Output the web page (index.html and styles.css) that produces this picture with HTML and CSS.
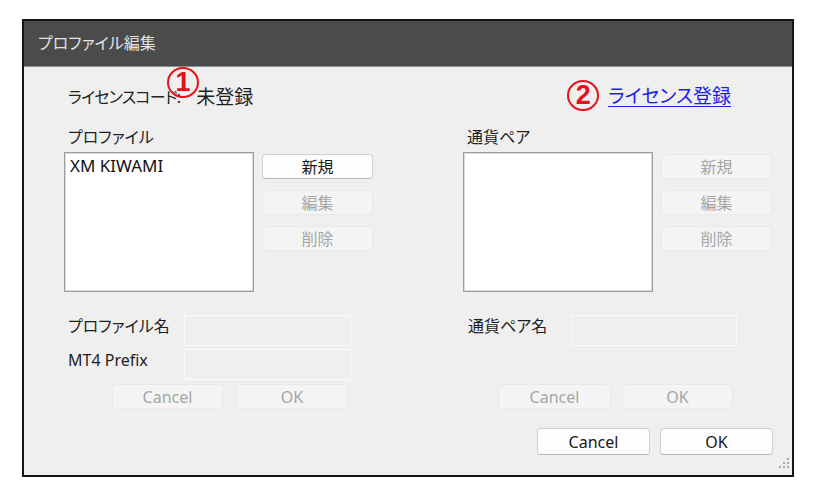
FILE: index.html
```html
<!DOCTYPE html>
<html lang="ja">
<head>
<meta charset="utf-8">
<title>プロファイル編集</title>
<link rel="stylesheet" href="styles.css">
</head>
<body>
<div class="dialog">
  <div class="titlebar">プロファイル編集</div>
  <div class="content">
    <div class="license-row">
      <div class="license-left">
        <span class="license-label">ライセンスコード:</span>
        <span class="license-value">未登録</span>
      </div>
      <span class="marker marker-1">1</span>
      <div class="license-right">
        <span class="marker marker-2">2</span>
        <a class="license-link" href="#">ライセンス登録</a>
      </div>
    </div>

    <div class="grid">
      <div class="group-label">プロファイル</div>
      <div class="group-label">通貨ペア</div>

      <div class="list-area">
        <div class="listbox"><div class="list-item">XM KIWAMI</div></div>
        <div class="side-buttons">
          <button class="btn">新規</button>
          <button class="btn" disabled>編集</button>
          <button class="btn" disabled>削除</button>
        </div>
      </div>
      <div class="list-area">
        <div class="listbox"></div>
        <div class="side-buttons">
          <button class="btn" disabled>新規</button>
          <button class="btn" disabled>編集</button>
          <button class="btn" disabled>削除</button>
        </div>
      </div>

      <div class="form form-left">
        <div class="form-row">
          <span class="form-label">プロファイル名</span>
          <span class="input"></span>
        </div>
        <div class="form-row">
          <span class="form-label">MT4 Prefix</span>
          <span class="input"></span>
        </div>
      </div>
      <div class="form form-right">
        <div class="form-row">
          <span class="form-label">通貨ペア名</span>
          <span class="input"></span>
        </div>
      </div>

      <div class="sub-buttons sub-left">
        <button class="btn btn-cancel" disabled>Cancel</button>
        <button class="btn btn-ok" disabled>OK</button>
      </div>
      <div class="sub-buttons sub-right">
        <button class="btn btn-cancel" disabled>Cancel</button>
        <button class="btn btn-ok" disabled>OK</button>
      </div>
    </div>

    <div class="main-buttons">
      <button class="btn btn-main">Cancel</button>
      <button class="btn btn-main">OK</button>
    </div>
  </div>
  <svg class="grip" width="14" height="14" viewBox="0 0 14 14">
    <rect x="11" y="1" width="2" height="2" fill="#a9a9a9"/>
    <rect x="7" y="5" width="2" height="2" fill="#a9a9a9"/>
    <rect x="11" y="5" width="2" height="2" fill="#a9a9a9"/>
    <rect x="3" y="9" width="2" height="2" fill="#a9a9a9"/>
    <rect x="7" y="9" width="2" height="2" fill="#a9a9a9"/>
    <rect x="11" y="9" width="2" height="2" fill="#a9a9a9"/>
  </svg>
</div>
</body>
</html>
```

FILE: styles.css
```css
* { box-sizing: border-box; }

html, body {
  margin: 0;
  padding: 0;
  background: #ffffff;
}

body {
  padding: 19px 0 0 22px;
  font-family: "Noto Sans", "Noto Sans CJK JP", sans-serif;
  font-feature-settings: "palt";
  color: #1e1e1e;
}

.dialog {
  position: relative;
  width: 772px;
  height: 458px;
  border: 2px solid #151515;
  background: #efefef;
  display: flex;
  flex-direction: column;
}

.titlebar {
  height: 46px;
  background: #4b4b4b;
  border-bottom: 1px solid #8d8d8d;
  color: #e4e4e4;
  font-size: 16px;
  line-height: 45px;
  padding-left: 14px;
  flex: none;
}

.content {
  flex: 1;
  padding: 0 19px 0 40px;
}

.license-row {
  position: relative;
  margin-top: 9px;
  height: 34px;
  display: flex;
  align-items: center;
  justify-content: space-between;
}

.license-left {
  padding-left: 4px;
  padding-top: 6px;
  display: flex;
  align-items: center;
}

.license-label {
  color: #222;
  font-size: 16px;
  letter-spacing: -0.8px;
}

.license-value {
  margin-left: 16px;
  font-size: 19px;
}

.marker {
  display: inline-flex;
  align-items: center;
  justify-content: center;
  width: 32px;
  height: 31px;
  border: 2px solid #e5121b;
  border-radius: 50%;
  color: #e5121b;
  font-family: "Liberation Sans", "Noto Sans", sans-serif;
  font-weight: bold;
  font-size: 27px;
  line-height: 1;
  background: transparent;
}

.marker-1 {
  position: absolute;
  left: 103px;
  top: -9px;
}

.license-right {
  display: flex;
  align-items: center;
  margin-right: 42px;
  padding-top: 4px;
}

.marker-2 {
  margin-right: 9px;
}

.license-link {
  color: #1d1de6;
  font-size: 19px;
  text-decoration: underline;
  text-underline-offset: 3px;
}

.grid {
  margin-top: 17px;
  display: grid;
  grid-template-columns: 309px 309px;
  column-gap: 90px;
  align-items: start;
}

.group-label {
  padding-left: 4px;
  height: 20px;
  line-height: 20px;
  font-size: 16px;
  margin-bottom: 5px;
}

.list-area {
  display: flex;
  gap: 8px;
  height: 140px;
}

.listbox {
  width: 190px;
  height: 140px;
  background: #ffffff;
  border: 1px solid #9d9d9d;
  box-shadow: inset 0 0 0 1px #d9d9d9;
  padding: 3px 5px;
}

.list-item {
  font-size: 17px;
  line-height: 20px;
  color: #111;
}

.side-buttons {
  display: flex;
  flex-direction: column;
  gap: 11px;
  padding-top: 2px;
}

.btn {
  font-family: "Noto Sans", "Noto Sans CJK JP", sans-serif;
  font-feature-settings: "palt";
  width: 111px;
  height: 25px;
  padding: 0;
  font-size: 16px;
  line-height: 1;
  background: #fdfdfd;
  color: #1a1a1a;
  border: 1px solid #cfcfcf;
  border-bottom-color: #b8b8b8;
  border-radius: 4px;
}

.btn:disabled {
  background: #f4f4f4;
  color: #a6a6a6;
  border-color: #e9e9e9;
}

.form {
  margin-top: 23px;
  display: flex;
  flex-direction: column;
  gap: 3px;
}

.form-row {
  display: flex;
  align-items: flex-start;
}

.form-label {
  padding-left: 4px;
  line-height: 22px;
  font-size: 16px;
  flex: none;
}

.form-left .form-label { width: 120px; }
.form-right .form-label { width: 108px; padding-left: 5px; }

.input {
  display: block;
  width: 167px;
  height: 31px;
  border: 1px solid #fafafa;
  background: #efefef;
}

.form-right .input { width: 166px; }

.sub-buttons {
  margin-top: 4px;
  display: flex;
}

.sub-left { padding-left: 48px; gap: 13px; }
.sub-left .btn-ok { width: 112px; }
.sub-right { padding-left: 35px; gap: 11px; }
.sub-right .btn-cancel { width: 113px; }

.main-buttons {
  margin-top: 19px;
  display: flex;
  justify-content: flex-end;
  gap: 10px;
}

.btn-main {
  width: 113px;
  height: 27px;
  font-size: 16px;
}

.grip {
  position: absolute;
  right: 2px;
  bottom: 4px;
}
```
